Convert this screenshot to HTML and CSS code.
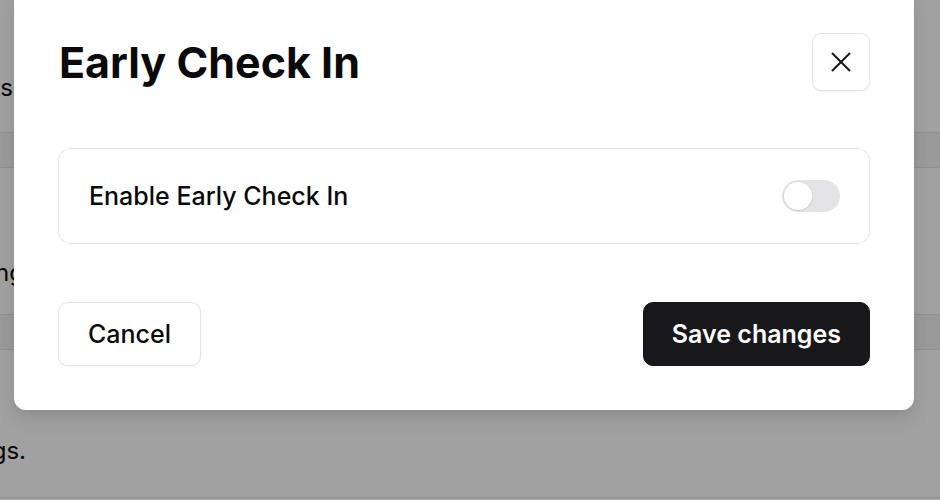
FILE: index.html
```html
<!DOCTYPE html>
<html lang="en">
<head>
    <meta charset="UTF-8">
    <meta name="viewport" content="width=device-width, initial-scale=1.0">
    <title>Early Check In</title>
    <link rel="stylesheet" href="styles.css">
</head>
<body>
    <!-- Page behind the dialog -->
    <div class="page">
        <div class="page-row row-first">
            <span class="page-text">Manage check in options for guests</span>
        </div>
        <div class="page-band"></div>
        <div class="page-row row-second">
            <span class="page-text">Allow guests to arrive before the standard timing</span>
        </div>
        <div class="page-band"></div>
        <div class="page-row row-third">
            <span class="page-text">These options apply to all bookings.</span>
        </div>
        <div class="page-line"></div>
    </div>

    <div class="overlay"></div>

    <div class="dialog" role="dialog" aria-labelledby="dialog-title">
        <header class="dialog-header">
            <h1 id="dialog-title">Early Check In</h1>
            <button class="icon-button" aria-label="Close">
                <svg width="34" height="34" viewBox="0 0 24 24" fill="none" stroke="currentColor" stroke-width="1.4" stroke-linecap="round" stroke-linejoin="round">
                    <path d="M18 6 6 18"/>
                    <path d="m6 6 12 12"/>
                </svg>
            </button>
        </header>

        <div class="setting-card">
            <span class="setting-label">Enable Early Check In</span>
            <button class="switch" role="switch" aria-checked="false">
                <span class="switch-thumb"></span>
            </button>
        </div>

        <footer class="dialog-footer">
            <button class="btn btn-outline">Cancel</button>
            <button class="btn btn-primary">Save changes</button>
        </footer>
    </div>
</body>
</html>
```

FILE: styles.css
```css
* {
    margin: 0;
    padding: 0;
    box-sizing: border-box;
    font-family: Inter, 'Noto Sans', sans-serif;
}

body {
    width: 940px;
    height: 500px;
    overflow: hidden;
    position: relative;
    background: #fff;
    color: #0a0a0a;
}

/* Background page */
.page {
    display: flex;
    flex-direction: column;
}

.page-row {
    display: flex;
    justify-content: flex-end;
    align-items: center;
    white-space: nowrap;
    font-size: 24px;
    color: #0a0a0a;
}

.row-first { width: 13px; height: 132px; padding-top: 43px; }
.row-second { width: 24px; height: 146px; padding-top: 62px; }
.row-third { width: 26px; height: 147px; padding-top: 54px; }

.page-band {
    height: 36px;
    background: #f4f4f5;
    border-top: 1px solid #e4e4e7;
    border-bottom: 1px solid #e4e4e7;
}

.page-line {
    height: 1px;
    background: #e4e4e7;
}

.overlay {
    position: absolute;
    inset: 0;
    background: rgba(0, 0, 0, 0.37);
}

/* Dialog */
.dialog {
    position: absolute;
    top: -11px;
    left: 14px;
    width: 900px;
    padding: 44px;
    background: #fff;
    border-radius: 12px;
    box-shadow: 0 10px 20px rgba(0, 0, 0, 0.08), 0 4px 8px rgba(0, 0, 0, 0.05);
    display: flex;
    flex-direction: column;
    gap: 57px;
}

.dialog-header {
    display: flex;
    justify-content: space-between;
    align-items: center;
}

.dialog-header h1 {
    font-size: 43px;
    font-weight: 700;
    color: #0a0a0a;
    margin-left: 1px;
}

.icon-button {
    width: 58px;
    height: 58px;
    display: flex;
    align-items: center;
    justify-content: center;
    background: #fff;
    border: 1px solid #e4e4e7;
    border-radius: 9px;
    box-shadow: 0 1px 2px rgba(0, 0, 0, 0.05);
    color: #18181b;
    cursor: pointer;
}

.setting-card {
    display: flex;
    justify-content: space-between;
    align-items: center;
    height: 96px;
    padding: 0 29px 0 30px;
    border: 1px solid #e4e4e7;
    border-radius: 12px;
    margin-bottom: 1px;
}

.setting-label {
    font-size: 25px;
    font-weight: 500;
    color: #0a0a0a;
}

.switch {
    width: 58px;
    height: 32px;
    padding: 2px;
    border: none;
    border-radius: 16px;
    background: #e4e4e7;
    display: flex;
    align-items: center;
    cursor: pointer;
}

.switch-thumb {
    width: 28px;
    height: 28px;
    border-radius: 50%;
    background: #fff;
    box-shadow: 0 0 0 1px rgba(0, 0, 0, 0.04), 0 1px 2px rgba(0, 0, 0, 0.08);
}

.dialog-footer {
    display: flex;
    justify-content: space-between;
    align-items: center;
}

.btn {
    height: 64px;
    padding: 0 29px;
    border-radius: 10px;
    font-size: 25px;
    font-weight: 500;
    cursor: pointer;
}

.btn-outline {
    background: #fff;
    color: #0a0a0a;
    border: 1px solid #e4e4e7;
    box-shadow: 0 1px 2px rgba(0, 0, 0, 0.05);
}

.btn-primary {
    padding: 0 28px;
    background: #18181b;
    color: #fafafa;
    border: 1px solid #18181b;
    font-weight: 600;
}
```
